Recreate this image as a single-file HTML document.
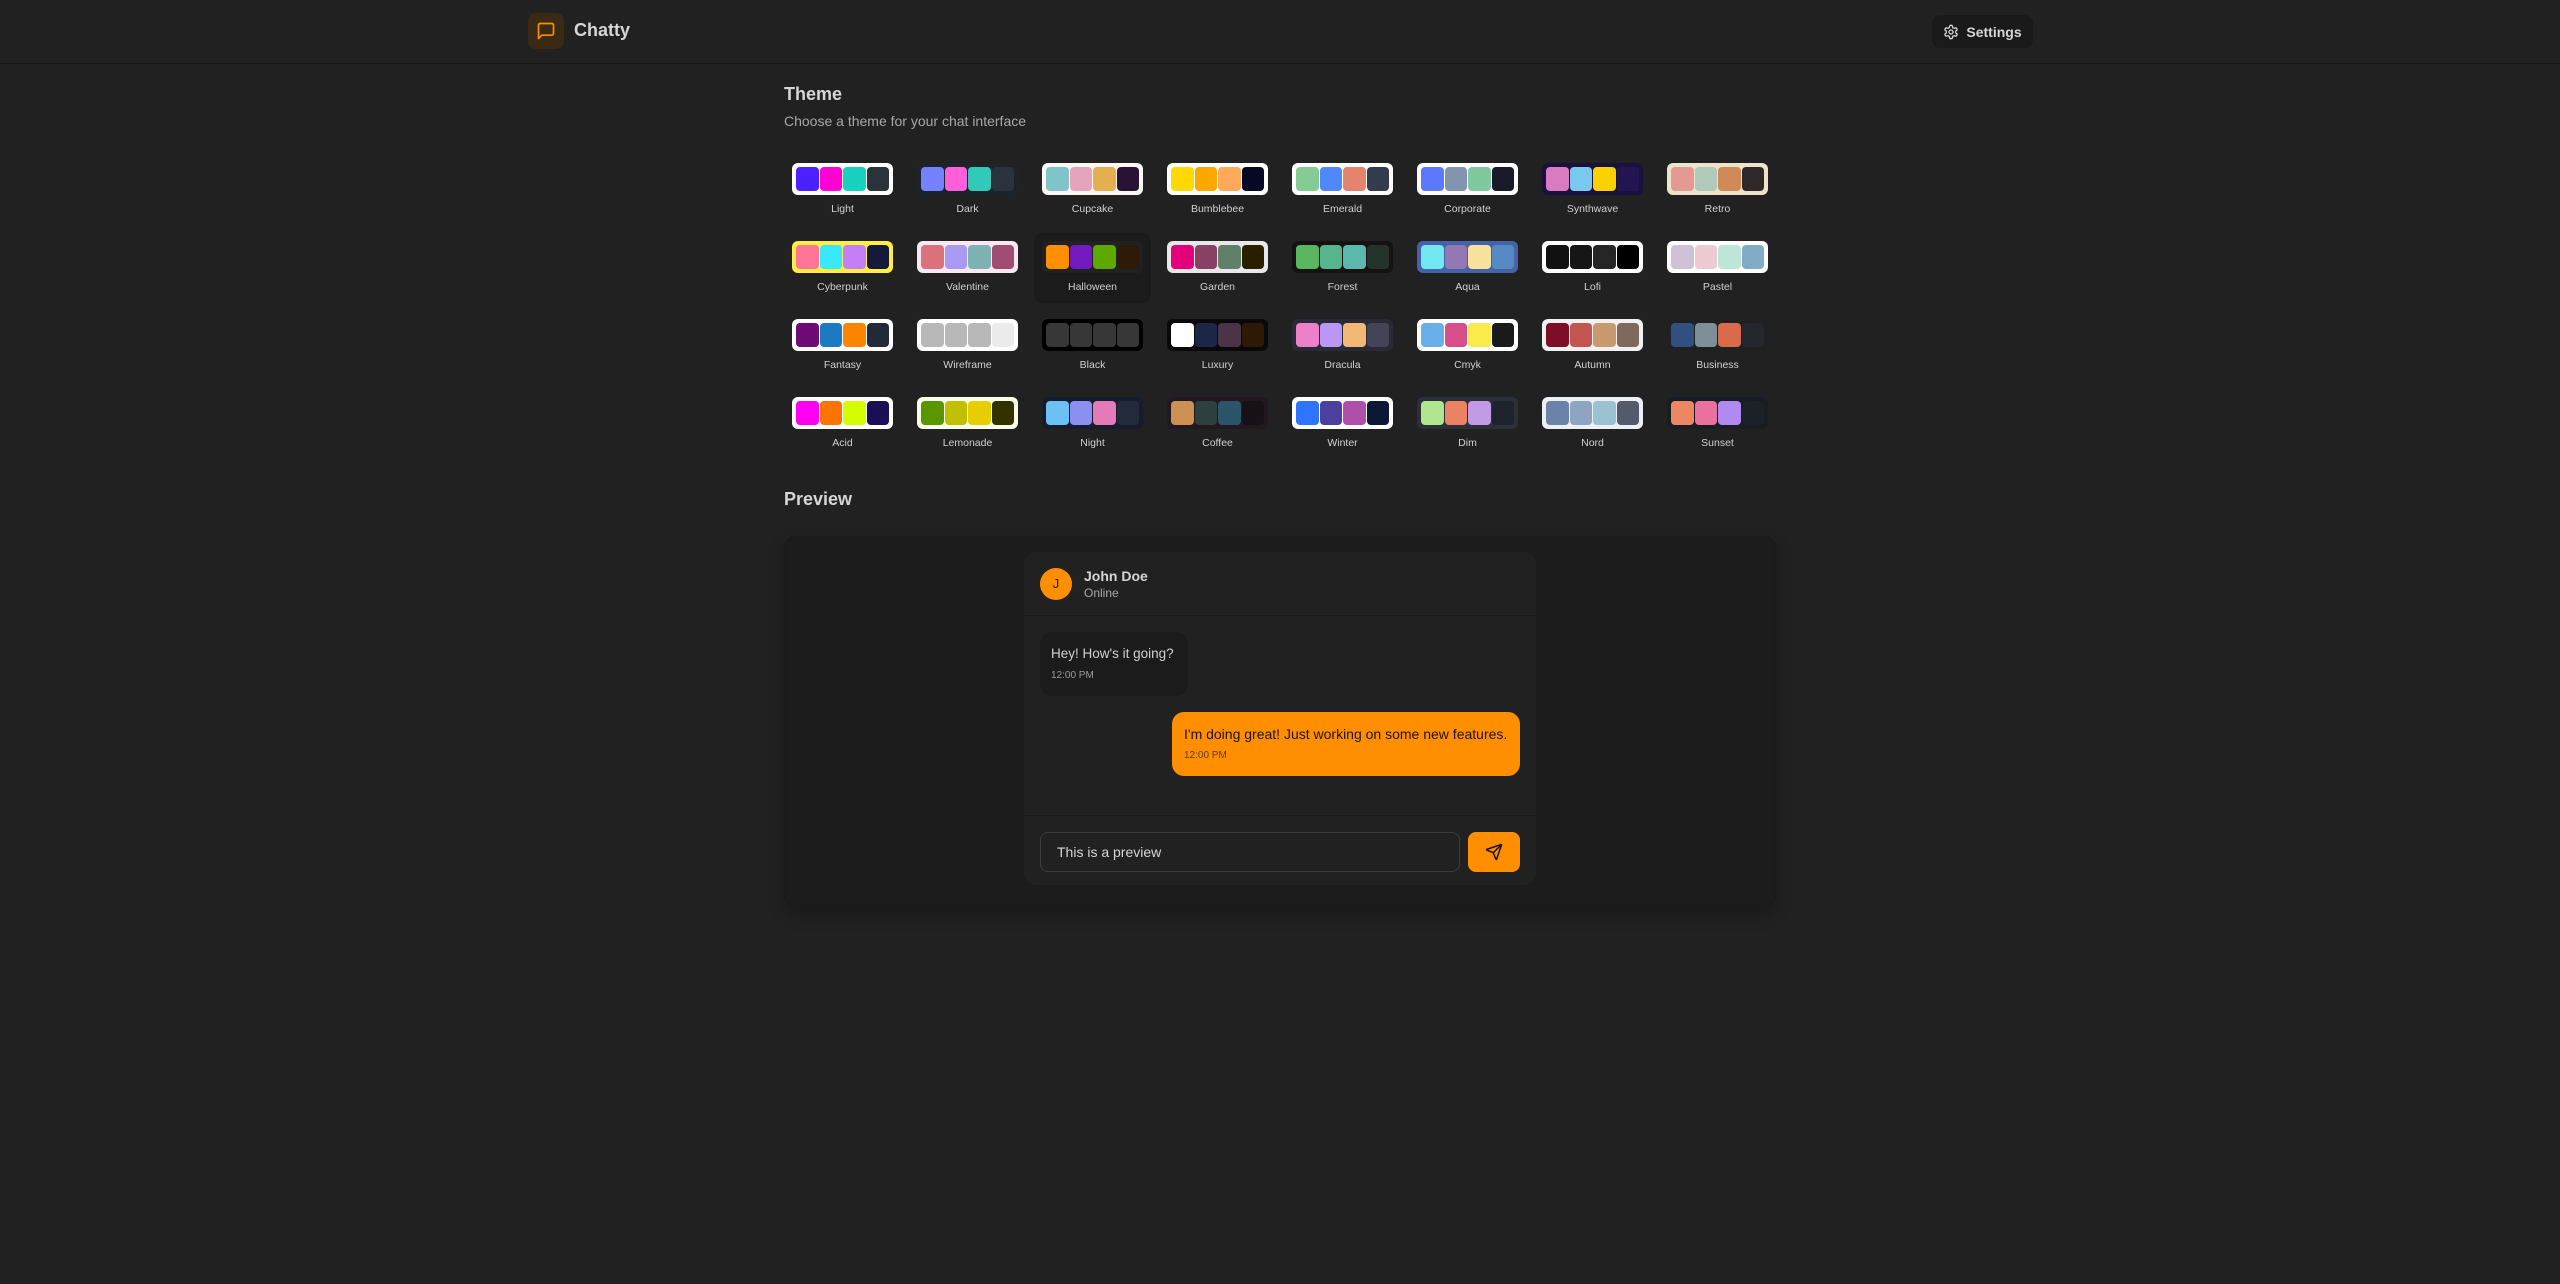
<!DOCTYPE html>
<html><head><meta charset="utf-8"><style>
*{box-sizing:border-box;margin:0;padding:0}
body{width:2560px;height:1284px;background:#212121;font-family:"Liberation Sans",sans-serif;color:#d0d0d0;position:relative;overflow:hidden}
.hdr{position:absolute;left:0;top:0;width:2560px;height:64px;border-bottom:1px solid #151515;background:#212121}
.logo{position:absolute;left:528px;top:13px;width:36px;height:36px;border-radius:8px;background:#3a2a14;display:flex;align-items:center;justify-content:center}
.brand{position:absolute;left:574px;top:20px;font-size:18px;font-weight:bold;color:#d6d6d6}
.set{position:absolute;left:1932px;top:15px;width:101px;height:33px;border-radius:8px;background:#1a1a1a;display:flex;align-items:center;justify-content:center;gap:7px;font-size:14px;font-weight:bold;color:#d6d6d6}
.h2{position:absolute;left:784px;font-size:18px;font-weight:bold;color:#d6d6d6;line-height:28px}
.sub{position:absolute;left:784px;top:111px;font-size:14px;line-height:20px;color:#a8a8a8}
.grid{position:absolute;left:784px;top:155px;width:992px;display:grid;grid-template-columns:repeat(8,117px);column-gap:8px;row-gap:8px}
.cell{height:70px;padding:8px;border-radius:8px;display:flex;flex-direction:column;align-items:center;gap:6px}
.cell.sel{background:#1b1b1b}
.sw{width:101px;height:32px;border-radius:6px;padding:4px;display:grid;grid-template-columns:repeat(4,1fr);gap:1px}
.sw i{border-radius:4px;display:block}
.lbl{font-size:10.5px;line-height:16px;color:#d0d0d0;font-weight:normal}
.pv{position:absolute;left:784px;top:536px;width:992px;height:370px;border-radius:12px;border:1px solid #1a1a1a;background:#1c1c1c;box-shadow:0 8px 16px rgba(0,0,0,.25)}
.card{position:absolute;left:1024px;top:552px;width:512px;height:333px;border-radius:12px;background:#212121}
.ch{height:64px;border-bottom:1px solid #171717;display:flex;align-items:center;padding:0 16px;gap:12px}
.av{width:32px;height:32px;border-radius:50%;background:#ff8f00;color:#1a1a1a;font-size:13px;display:flex;align-items:center;justify-content:center}
.nm{font-size:14px;font-weight:bold;color:#d6d6d6;line-height:18px}
.on{font-size:12px;color:#a8a8a8;line-height:16px}
.b1{position:absolute;left:16px;top:80px;width:148px;height:64px;border-radius:12px;background:#1b1b1b;padding:12px 11px;white-space:nowrap}
.b2{position:absolute;right:16px;top:160px;width:348px;height:64px;border-radius:12px;background:#ff8f00;padding:12px 12px;color:#1f1300;white-space:nowrap}
.mt{font-size:14px;line-height:20px}
.b1 .mt{font-size:13.5px}
.tm{font-size:10px;margin-top:6px;opacity:.7}
.ft{position:absolute;left:0;top:263px;width:512px;height:70px;border-top:1px solid #171717}
.inp{position:absolute;left:16px;top:16px;width:420px;height:40px;border:1px solid #3d3d3d;border-radius:8px;background:#212121;font-size:14px;color:#d6d6d6;padding:0 16px;line-height:38px}
.btn{position:absolute;left:444px;top:16px;width:52px;height:40px;border-radius:8px;background:#ff8f00;display:flex;align-items:center;justify-content:center}
</style></head><body>
<div class="hdr">
<div class="logo"><svg width="20" height="20" viewBox="0 0 24 24" fill="none" stroke="#ff8f00" stroke-width="2" stroke-linecap="round" stroke-linejoin="round"><path d="M21 15a2 2 0 0 1-2 2H7l-4 4V5a2 2 0 0 1 2-2h14a2 2 0 0 1 2 2z"/></svg></div>
<div class="brand">Chatty</div>
<div class="set"><svg width="16" height="16" viewBox="0 0 24 24" fill="none" stroke="#d6d6d6" stroke-width="2" stroke-linecap="round" stroke-linejoin="round"><path d="M12.22 2h-.44a2 2 0 0 0-2 2v.18a2 2 0 0 1-1 1.73l-.43.25a2 2 0 0 1-2 0l-.15-.08a2 2 0 0 0-2.73.73l-.22.38a2 2 0 0 0 .73 2.73l.15.1a2 2 0 0 1 1 1.72v.51a2 2 0 0 1-1 1.74l-.15.09a2 2 0 0 0-.73 2.73l.22.38a2 2 0 0 0 2.73.73l.15-.08a2 2 0 0 1 2 0l.43.25a2 2 0 0 1 1 1.73V20a2 2 0 0 0 2 2h.44a2 2 0 0 0 2-2v-.18a2 2 0 0 1 1-1.73l.43-.25a2 2 0 0 1 2 0l.15.08a2 2 0 0 0 2.73-.73l.22-.39a2 2 0 0 0-.73-2.73l-.15-.08a2 2 0 0 1-1-1.74v-.5a2 2 0 0 1 1-1.74l.15-.09a2 2 0 0 0 .73-2.73l-.22-.38a2 2 0 0 0-2.73-.73l-.15.08a2 2 0 0 1-2 0l-.43-.25a2 2 0 0 1-1-1.73V4a2 2 0 0 0-2-2z"/><circle cx="12" cy="12" r="3"/></svg>Settings</div>
</div>
<div class="h2" style="top:80px">Theme</div>
<div class="sub">Choose a theme for your chat interface</div>
<div class="grid">
<div class="cell"><div class="sw" style="background:#fff"><i style="background:#4b22ff"></i><i style="background:#ff00d3"></i><i style="background:#1ad1bf"></i><i style="background:#2a323c"></i></div><div class="lbl">Light</div></div>
<div class="cell"><div class="sw" style="background:#1d232a"><i style="background:#7582ff"></i><i style="background:#ff5fd9"></i><i style="background:#33c9b8"></i><i style="background:#2a323c"></i></div><div class="lbl">Dark</div></div>
<div class="cell"><div class="sw" style="background:#faf7f5"><i style="background:#80c3c8"></i><i style="background:#e5a3bc"></i><i style="background:#e3af50"></i><i style="background:#291334"></i></div><div class="lbl">Cupcake</div></div>
<div class="cell"><div class="sw" style="background:#fff"><i style="background:#ffd900"></i><i style="background:#fca800"></i><i style="background:#ffa95c"></i><i style="background:#070726"></i></div><div class="lbl">Bumblebee</div></div>
<div class="cell"><div class="sw" style="background:#fff"><i style="background:#84cc93"></i><i style="background:#5087f9"></i><i style="background:#e6836f"></i><i style="background:#333c4d"></i></div><div class="lbl">Emerald</div></div>
<div class="cell"><div class="sw" style="background:#fff"><i style="background:#5c79fd"></i><i style="background:#8394b0"></i><i style="background:#80c9a0"></i><i style="background:#181a2a"></i></div><div class="lbl">Corporate</div></div>
<div class="cell"><div class="sw" style="background:#1a103d"><i style="background:#d97bc0"></i><i style="background:#79c8ee"></i><i style="background:#fbd200"></i><i style="background:#221551"></i></div><div class="lbl">Synthwave</div></div>
<div class="cell"><div class="sw" style="background:#ece3ca"><i style="background:#e49995"></i><i style="background:#afcab8"></i><i style="background:#cf8a58"></i><i style="background:#2e282a"></i></div><div class="lbl">Retro</div></div>

<div class="cell"><div class="sw" style="background:#ffee44"><i style="background:#ff7598"></i><i style="background:#3ae8fc"></i><i style="background:#c47ff8"></i><i style="background:#151a3b"></i></div><div class="lbl">Cyberpunk</div></div>
<div class="cell"><div class="sw" style="background:#fae7f4"><i style="background:#d9727d"></i><i style="background:#a99af2"></i><i style="background:#7fb3b3"></i><i style="background:#a14c73"></i></div><div class="lbl">Valentine</div></div>
<div class="cell sel"><div class="sw" style="background:#212121"><i style="background:#ff8f00"></i><i style="background:#7219c0"></i><i style="background:#5fa800"></i><i style="background:#2d1b07"></i></div><div class="lbl">Halloween</div></div>
<div class="cell"><div class="sw" style="background:#e9e7e7"><i style="background:#e5007b"></i><i style="background:#874164"></i><i style="background:#627f69"></i><i style="background:#291e00"></i></div><div class="lbl">Garden</div></div>
<div class="cell"><div class="sw" style="background:#171212"><i style="background:#5ab65e"></i><i style="background:#56b58f"></i><i style="background:#5ab8ad"></i><i style="background:#233329"></i></div><div class="lbl">Forest</div></div>
<div class="cell"><div class="sw" style="background:#4763a8"><i style="background:#72e9f1"></i><i style="background:#9378b1"></i><i style="background:#f7e39d"></i><i style="background:#568ac4"></i></div><div class="lbl">Aqua</div></div>
<div class="cell"><div class="sw" style="background:#fff"><i style="background:#111"></i><i style="background:#161616"></i><i style="background:#262626"></i><i style="background:#000"></i></div><div class="lbl">Lofi</div></div>
<div class="cell"><div class="sw" style="background:#fff"><i style="background:#d1c1d7"></i><i style="background:#eecad2"></i><i style="background:#bde6d6"></i><i style="background:#82acc5"></i></div><div class="lbl">Pastel</div></div>

<div class="cell"><div class="sw" style="background:#fff"><i style="background:#6e0b75"></i><i style="background:#1d79c2"></i><i style="background:#fb8500"></i><i style="background:#222a38"></i></div><div class="lbl">Fantasy</div></div>
<div class="cell"><div class="sw" style="background:#fff"><i style="background:#b8b8b8"></i><i style="background:#b8b8b8"></i><i style="background:#b8b8b8"></i><i style="background:#ebebeb"></i></div><div class="lbl">Wireframe</div></div>
<div class="cell"><div class="sw" style="background:#000"><i style="background:#373737"></i><i style="background:#373737"></i><i style="background:#373737"></i><i style="background:#373737"></i></div><div class="lbl">Black</div></div>
<div class="cell"><div class="sw" style="background:#09090b"><i style="background:#fff"></i><i style="background:#1c2745"></i><i style="background:#4a3445"></i><i style="background:#2d1905"></i></div><div class="lbl">Luxury</div></div>
<div class="cell"><div class="sw" style="background:#282a36"><i style="background:#ee80c9"></i><i style="background:#b998f4"></i><i style="background:#f2b874"></i><i style="background:#434456"></i></div><div class="lbl">Dracula</div></div>
<div class="cell"><div class="sw" style="background:#fff"><i style="background:#6aaeea"></i><i style="background:#d74f8a"></i><i style="background:#faea4c"></i><i style="background:#1a1a1a"></i></div><div class="lbl">Cmyk</div></div>
<div class="cell"><div class="sw" style="background:#f1f1f1"><i style="background:#7e0d2a"></i><i style="background:#c45652"></i><i style="background:#c99a70"></i><i style="background:#7d6a5c"></i></div><div class="lbl">Autumn</div></div>
<div class="cell"><div class="sw" style="background:#202020"><i style="background:#2f5080"></i><i style="background:#7d8f99"></i><i style="background:#d96a4b"></i><i style="background:#24272d"></i></div><div class="lbl">Business</div></div>

<div class="cell"><div class="sw" style="background:#fff"><i style="background:#ff00f4"></i><i style="background:#ff7400"></i><i style="background:#d4fd03"></i><i style="background:#1a0f55"></i></div><div class="lbl">Acid</div></div>
<div class="cell"><div class="sw" style="background:#f8fde8"><i style="background:#5a9600"></i><i style="background:#c1c000"></i><i style="background:#e8ce00"></i><i style="background:#333100"></i></div><div class="lbl">Lemonade</div></div>
<div class="cell"><div class="sw" style="background:#161c2b"><i style="background:#6cc0f4"></i><i style="background:#8a8ff0"></i><i style="background:#e47ab7"></i><i style="background:#232a3b"></i></div><div class="lbl">Night</div></div>
<div class="cell"><div class="sw" style="background:#21191f"><i style="background:#cb9152"></i><i style="background:#2e3f40"></i><i style="background:#2b5568"></i><i style="background:#161116"></i></div><div class="lbl">Coffee</div></div>
<div class="cell"><div class="sw" style="background:#fff"><i style="background:#2f74fe"></i><i style="background:#4c3f9e"></i><i style="background:#b04faa"></i><i style="background:#0d1836"></i></div><div class="lbl">Winter</div></div>
<div class="cell"><div class="sw" style="background:#2b2f38"><i style="background:#b0e690"></i><i style="background:#eb8262"></i><i style="background:#c29be6"></i><i style="background:#1e222b"></i></div><div class="lbl">Dim</div></div>
<div class="cell"><div class="sw" style="background:#eceff4"><i style="background:#6b83a8"></i><i style="background:#8ea5c2"></i><i style="background:#9bc2d1"></i><i style="background:#525a6c"></i></div><div class="lbl">Nord</div></div>
<div class="cell"><div class="sw" style="background:#171d22"><i style="background:#ed8662"></i><i style="background:#e8719d"></i><i style="background:#b08af1"></i><i style="background:#1c2128"></i></div><div class="lbl">Sunset</div></div>
</div>
<div class="h2" style="top:485px">Preview</div>
<div class="pv"></div>
<div class="card">
<div class="ch"><div class="av">J</div><div><div class="nm">John Doe</div><div class="on">Online</div></div></div>
<div class="b1"><div class="mt">Hey! How's it going?</div><div class="tm">12:00 PM</div></div>
<div class="b2"><div class="mt">I'm doing great! Just working on some new features.</div><div class="tm">12:00 PM</div></div>
<div class="ft"><div class="inp">This is a preview</div><div class="btn"><svg width="18" height="18" viewBox="0 0 24 24" fill="none" stroke="#1a1000" stroke-width="2" stroke-linecap="round" stroke-linejoin="round"><path d="M14.536 21.686a.5.5 0 0 0 .937-.024l6.5-19a.496.496 0 0 0-.635-.635l-19 6.5a.5.5 0 0 0-.024.937l7.93 3.18a2 2 0 0 1 1.112 1.11z"/><path d="m21.854 2.147-10.94 10.939"/></svg></div></div>
</div>
</body></html>
